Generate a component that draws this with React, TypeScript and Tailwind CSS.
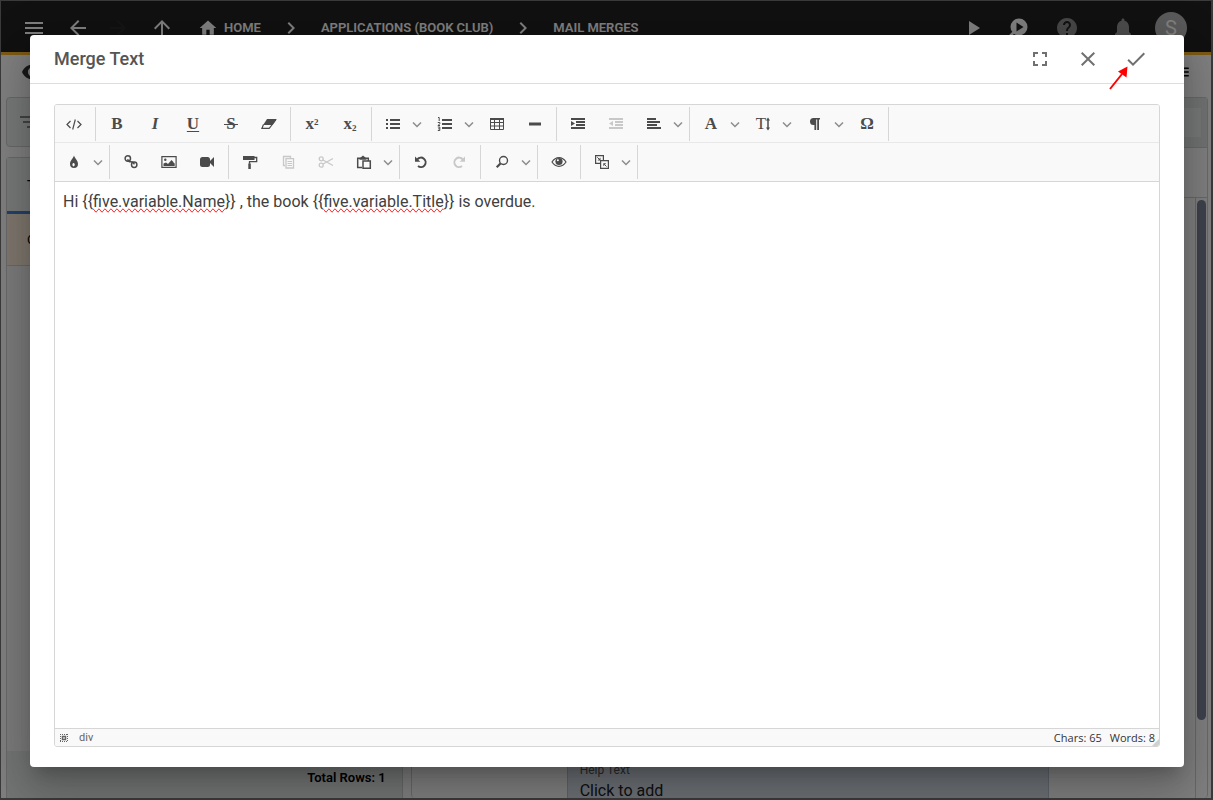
import type { ReactNode } from "react";
import {
  MdArrowBack,
  MdArrowForward,
  MdArrowUpward,
  MdCheck,
  MdChevronRight,
  MdClose,
  MdFilterList,
  MdFullscreen,
  MdHelp,
  MdHome,
  MdMenu,
  MdNotifications,
  MdPlayArrow,
  MdVisibility,
} from "react-icons/md";

interface Tool {
  label: string;
  icon: ReactNode;
  menu?: boolean;
  disabled?: boolean;
}

function Icon({ children }: { children: ReactNode }) {
  return (
    <svg viewBox="0 0 16 16" className="size-4" fill="currentColor" aria-hidden="true">
      {children}
    </svg>
  );
}

function Glyph({ children, className = "" }: { children: ReactNode; className?: string }) {
  return (
    <span className={`font-["Liberation_Serif",serif] text-[17px] leading-4 font-bold ${className}`}>
      {children}
    </span>
  );
}

const stroke = { fill: "none", stroke: "currentColor" };

const rowOne: Tool[][] = [
  [
    {
      label: "HTML code",
      icon: (
        <Icon>
          <path {...stroke} strokeWidth="1.2" d="M4.500 5 1 8.500l3.500 3.500M11.500 5 15 8.500l-3.500 3.500M9.300 3.500 6.700 13.500" />
        </Icon>
      ),
    },
  ],
  [
    { label: "Bold", icon: <Glyph>B</Glyph> },
    { label: "Italic", icon: <Glyph className="italic">I</Glyph> },
    {
      label: "Underline",
      icon: <Glyph className="underline decoration-1 underline-offset-2">U</Glyph>,
    },
    {
      label: "Strikethrough",
      icon: (
        <span className="relative flex items-center justify-center">
          <Glyph>S</Glyph>
          <span className="absolute -inset-x-0.5 top-2 h-px bg-current" />
        </span>
      ),
    },
    {
      label: "Remove format",
      icon: (
        <Icon>
          <path d="M6 3h9.700L11.500 9H2.200z" />
          <path {...stroke} strokeWidth="1.2" d="M2.500 8.500.900 12.400h7.300L11.300 8.500 15 3.500" />
        </Icon>
      ),
    },
  ],
  [
    {
      label: "Superscript",
      icon: (
        <Glyph>
          x<sup className="text-[9px]">2</sup>
        </Glyph>
      ),
    },
    {
      label: "Subscript",
      icon: (
        <Glyph>
          x<sub className="text-[9px]">2</sub>
        </Glyph>
      ),
    },
  ],
  [
    {
      label: "Bulleted list",
      menu: true,
      icon: (
        <Icon>
          <path d="M5 3h10v2H5zM5 7h10v2H5zM5 11h10v2H5zM1 3h2v2H1zM1 7h2v2H1zM1 11h2v2H1z" />
        </Icon>
      ),
    },
    {
      label: "Numbered list",
      menu: true,
      icon: (
        <Icon>
          <path d="M5 3h10v2H5zM5 7h10v2H5zM5 11h10v2H5z" />
          <path {...stroke} d="M1 1.500h1.200v3.500M.800 6.500h2v1.200L1 9.500h2M.800 11h2v3.500h-2M1.200 12.800h1.500" />
        </Icon>
      ),
    },
    {
      label: "Insert table",
      icon: (
        <Icon>
          <path {...stroke} d="M1.500 2.500h13v11h-13zM2 6.500h12M2 10h12M5.500 3v10M10.500 3v10" />
          <path d="M1 2h14v2H1z" />
        </Icon>
      ),
    },
    { label: "Horizontal line", icon: <Icon><path d="M2 6.500h12v3H2z" /></Icon> },
  ],
  [
    {
      label: "Indent",
      icon: (
        <Icon>
          <path d="M1 2h14v2H1zM6 5h9v2H6zM6 8h9v2H6zM1 11h14v2H1zM1 5l4 2.500L1 10z" />
        </Icon>
      ),
    },
    {
      label: "Outdent",
      disabled: true,
      icon: (
        <Icon>
          <path d="M1 2h14v2H1zM7 5h8v2H7zM7 8h8v2H7zM1 11h14v2H1zM5 5 1 7.500 5 10z" />
        </Icon>
      ),
    },
    {
      label: "Align",
      menu: true,
      icon: (
        <Icon>
          <path d="M1 2h9v2H1zM1 5h13v2H1zM1 8h10v2H1zM1 11h14v2H1z" />
        </Icon>
      ),
    },
  ],
  [
    { label: "Font name", menu: true, icon: <Glyph>A</Glyph> },
    {
      label: "Font size",
      menu: true,
      icon: (
        <span className="flex items-center">
          <Glyph className="font-normal!">T</Glyph>
          <svg viewBox="0 0 4 16" className="h-4 w-1" aria-hidden="true">
            <path {...stroke} strokeWidth="1.500" d="M2 3v10" />
            <path fill="currentColor" d="M2 1.500 4 4.500H0zM2 14.500l2-3H0z" />
          </svg>
        </span>
      ),
    },
    {
      label: "Paragraph",
      menu: true,
      icon: (
        <Icon>
          <path d="M6.500 2H13v1.500h-1V14h-1.800V3.500H9.200V14H7.400V9h-.900a3.500 3.500 0 0 1 0-7z" />
        </Icon>
      ),
    },
    { label: "Special character", icon: <Glyph>Ω</Glyph> },
  ],
];

const rowTwo: Tool[][] = [
  [
    {
      label: "Text color",
      menu: true,
      icon: (
        <Icon>
          <path fillRule="evenodd" d="M8 1.500c.700 3 4 5 4 8.500a4 4 0 0 1-8 0c0-3.500 3.300-5.500 4-8.500zM7.500 9a1.200 1.700 0 1 0 .100 0z" />
        </Icon>
      ),
    },
  ],
  [
    {
      label: "Insert link",
      icon: (
        <Icon>
          <g {...stroke} strokeWidth="1.500">
            <circle cx="4.800" cy="4.500" r="2.700" />
            <circle cx="11.200" cy="10.700" r="2.700" />
            <path d="M4.800 5.200c0 1.500 1.200 2.600 3.200 2.600s3 1 3.200 2.500" />
          </g>
        </Icon>
      ),
    },
    {
      label: "Insert image",
      icon: (
        <Icon>
          <path {...stroke} strokeWidth="1.2" d="M.900 2.600h14.200v10.800H.900z" />
          <path d="M2.500 12V9.500l2.500-1L7 10l3.500-4 1.500 1.500.500 1 1.200 1V12z" />
          <circle cx="4.300" cy="5.800" r="1.200" />
        </Icon>
      ),
    },
    {
      label: "Insert video",
      icon: (
        <Icon>
          <rect x="1" y="3" width="10" height="10" rx="2.500" />
          <path d="m10 8 5-5v10z" />
        </Icon>
      ),
    },
  ],
  [
    {
      label: "Format painter",
      icon: (
        <Icon>
          <path d="M1 2h11.500v4H1z" />
          <path {...stroke} strokeWidth="1.3" d="M12 3.500h2.700v4.200H7.500v2" />
          <path d="M6.300 9.500h2.500V15H6.300z" />
        </Icon>
      ),
    },
    {
      label: "Copy",
      disabled: true,
      icon: (
        <Icon>
          <path {...stroke} strokeWidth="1.3" d="M5 11.500H3.500v-9h7v2M6 4.700h7.500v9.300H6z" />
          <path {...stroke} d="M7.500 7.500h4.500M7.500 9.500h4.500M7.500 11.500h4.500" />
        </Icon>
      ),
    },
    {
      label: "Cut",
      disabled: true,
      icon: (
        <Icon>
          <g {...stroke} strokeWidth="1.3">
            <circle cx="3.200" cy="4.800" r="2" />
            <circle cx="3.200" cy="11.200" r="2" />
            <path d="m5 6 10 5.500M5 10l10-5.500" />
          </g>
        </Icon>
      ),
    },
    {
      label: "Paste",
      menu: true,
      icon: (
        <Icon>
          <path {...stroke} strokeWidth="1.5" d="M6 13.500H1.700V4.200h10.600v2M7 7h7.300v7.300H7z" />
          <path d="M3.500 4.500 7 1.500l3.500 3v1.300h-7z" />
        </Icon>
      ),
    },
  ],
  [
    {
      label: "Undo",
      icon: (
        <Icon>
          <path {...stroke} strokeWidth="2" d="M4.300 5.300a4.700 4.700 0 1 1 .700 6.700" />
          <path d="M2 2.500v5.300h5.300z" />
        </Icon>
      ),
    },
    {
      label: "Redo",
      disabled: true,
      icon: (
        <Icon>
          <path {...stroke} strokeWidth="2" d="M11.700 5.300a4.700 4.700 0 1 0-.700 6.700" />
          <path d="M14 2.500v5.300H8.700z" />
        </Icon>
      ),
    },
  ],
  [
    {
      label: "Find",
      menu: true,
      icon: (
        <Icon>
          <circle cx="9.500" cy="6.500" r="4" {...stroke} strokeWidth="1.4" />
          <path {...stroke} strokeWidth="2.200" d="m6.500 9.500-3.800 3.800" />
        </Icon>
      ),
    },
  ],
  [
    {
      label: "Preview",
      icon: (
        <Icon>
          <path {...stroke} strokeWidth="1.2" d="M1 8c2-3 4.500-4.300 7-4.300S13 5 15 8c-2 3-4.500 4.300-7 4.300S3 11 1 8z" />
          <circle cx="8" cy="7.500" r="3.600" />
          <circle cx="6.900" cy="6.300" r="1" fill="#f9f9f9" />
        </Icon>
      ),
    },
  ],
  [
    {
      label: "Select block",
      menu: true,
      icon: (
        <Icon>
          <path {...stroke} strokeWidth="1.200" d="M6.500 9.400H1.600V1.600h7.800v4.900M6.600 6.600h7.800v7.800H6.600z" />
          <path {...stroke} d="m3.300 3.300 2 2M12.500 12.500l-2-2" />
          <path d="M6.500 3.500v3h-3zM9.300 12.300v-3h3z" />
        </Icon>
      ),
    },
  ],
];

function ToolbarRow({ groups }: { groups: Tool[][] }) {
  return (
    <div className="flex">
      {groups.map((group) => (
        <div
          key={group[0].label}
          className="flex h-[34px] border-r border-[#d6d6d6] px-0.5 first:pl-0"
        >
          {group.map((tool) => (
            <div key={tool.label} className="flex">
              <button
                type="button"
                aria-label={tool.label}
                disabled={tool.disabled}
                className="flex w-[38px] items-center justify-center text-[#4b4b4b] disabled:text-[#c8c8c8]"
              >
                {tool.icon}
              </button>
              {tool.menu && (
                <button
                  type="button"
                  aria-label={`${tool.label} options`}
                  className="flex w-3.5 items-center text-[#8c8c8c]"
                >
                  <svg viewBox="0 0 10 10" className="size-2.5" aria-hidden="true">
                    <path {...stroke} strokeWidth="1.500" d="m1 3.500 4 4 4-4" />
                  </svg>
                </button>
              )}
            </div>
          ))}
        </div>
      ))}
    </div>
  );
}

function TopBar() {
  return (
    <header className="flex h-[54px] shrink-0 items-center justify-between border-b-3 border-[#fbb72a] bg-[#222] pt-0.5 pr-6 pl-[21px] text-white">
      <div className="flex items-center">
        <button type="button" aria-label="Menu"><MdMenu size={24} /></button>
        <button type="button" aria-label="Back" className="ml-5"><MdArrowBack size={24} /></button>
        <button type="button" aria-label="Forward" disabled className="ml-4 text-[#2b2b2b]">
          <MdArrowForward size={24} />
        </button>
        <button type="button" aria-label="Up" className="ml-5"><MdArrowUpward size={24} /></button>
        <nav className="ml-6 flex items-center text-[13px] font-semibold">
          <a href="#home" className="flex items-center gap-1.5">
            <MdHome size={20} />
            HOME
          </a>
          <MdChevronRight size={24} className="mx-[18px]" />
          <a href="#applications">APPLICATIONS (BOOK CLUB)</a>
          <MdChevronRight size={24} className="mx-[18px]" />
          <a href="#mail-merges">MAIL MERGES</a>
        </nav>
      </div>
      <div className="flex items-center">
        <button type="button" aria-label="Run"><MdPlayArrow size={24} /></button>
        <button type="button" aria-label="Inspect" className="ml-[22px]">
          <svg viewBox="0 0 24 24" className="size-6" aria-hidden="true">
            <circle cx="12" cy="11" r="8.500" fill="currentColor" />
            <path {...stroke} strokeWidth="2.500" d="m7 16-4.500 4.500" />
            <path fill="#222" d="M9.500 6.500v9l7-4.500z" />
          </svg>
        </button>
        <button type="button" aria-label="Help" className="ml-6 text-[#8e8e8e]">
          <MdHelp size={24} />
        </button>
        <button type="button" aria-label="Notifications" className="ml-8 text-[#999]">
          <MdNotifications size={24} />
        </button>
        <span className="ml-5 flex size-8 items-center justify-center rounded-full bg-[#b5b5b5] text-xl">
          S
        </span>
      </div>
    </header>
  );
}

function PageBehind() {
  return (
    <div className="flex h-screen flex-col border border-r-2 border-b-2 border-[#777] bg-white">
      <TopBar />
      <div className="flex h-[42px] shrink-0 items-center justify-between px-5 pb-2">
        <MdVisibility size={24} className="text-[#333]" />
        <MdMenu size={18} />
      </div>
      <div className="flex min-h-0 flex-1 gap-2 pr-[3px] pl-[5px]">
        <section className="flex w-[33%] flex-col">
          <div className="flex h-[50px] shrink-0 items-center rounded border border-[#d0d0d0] bg-[#eef2f3] px-2.5 text-[#888]">
            <MdFilterList size={24} />
          </div>
          <div className="mt-2.5 flex flex-1 flex-col rounded-t border border-b-0 border-[#d0d0d0] bg-[#f7f7f7]">
            <div className="flex h-[56px] items-center border-b-3 border-[#4285d6] bg-[#eef2f3] px-5 text-[13px] font-medium">
              Title
            </div>
            <div className="flex h-[52px] items-center border-b border-[#d0d0d0] bg-[#ffefdc] px-5 text-[13px]">
              Overdue
            </div>
            <div className="mt-auto flex h-[47px] items-center justify-end bg-[#e6eaeb] px-4 pt-1.5 text-[13px] font-semibold">
              Total Rows: 1
            </div>
          </div>
        </section>
        <section className="flex flex-1 flex-col rounded border border-b-0 border-[#d0d0d0]">
          <div className="flex h-[50px] shrink-0 border-b border-[#d0d0d0] bg-[#e2e7e7] p-2.5 pr-1.5">
            <div className="flex-1 bg-[#eef3f2]" />
          </div>
          <div className="h-[50px] shrink-0 border-b border-[#d0d0d0]" />
          <div className="flex min-h-0 flex-1">
            <div className="flex flex-1 flex-col justify-end">
              <div className="mr-[146px] ml-[155px] border border-b-0 border-[#b9c6d6] bg-[#d8e0ea] px-3 pt-5">
                <label htmlFor="help-text" className="block text-xs leading-4 text-[#555]">
                  Help Text
                </label>
                <input
                  id="help-text"
                  defaultValue="Click to add"
                  className="block h-5 w-full bg-transparent pt-1 text-base leading-4 text-[#222]"
                />
              </div>
            </div>
            <div className="w-3 border-l border-[#d0d0d0] px-px pt-0.5">
              <div className="h-[520px] rounded-full bg-[#7d8599]" />
            </div>
          </div>
        </section>
      </div>
    </div>
  );
}

function MergeTextDialog() {
  return (
    <div
      role="dialog"
      aria-modal="true"
      aria-labelledby="dialog-title"
      className="relative flex flex-1 flex-col rounded bg-white shadow-[0_11px_15px_-7px_rgba(0,0,0,0.2),0_24px_38px_3px_rgba(0,0,0,0.14),0_9px_46px_8px_rgba(0,0,0,0.12)]"
    >
      <div className="flex h-[49px] shrink-0 items-center justify-between border-b border-[#dedede] px-6">
        <h1 id="dialog-title" className="text-lg font-medium text-[#555]">Merge Text</h1>
        <div className="flex text-[#707070]">
          <button type="button" aria-label="Full screen" className="flex size-12 items-center justify-center">
            <MdFullscreen size={24} />
          </button>
          <button type="button" aria-label="Close" className="flex size-12 items-center justify-center">
            <MdClose size={24} />
          </button>
          <button type="button" aria-label="Save" className="relative flex size-12 items-center justify-center">
            <MdCheck size={24} />
            <svg viewBox="0 0 20 26" className="absolute top-[30px] -left-1 h-[26px] w-5" aria-hidden="true">
              <path d="M2 24 14 9" fill="none" stroke="#f00" strokeWidth="2" />
              <path d="M19.500 1.500 10 6.500l8.500 6z" fill="#f00" />
            </svg>
          </button>
        </div>
      </div>

      <div className="flex min-h-0 flex-1 px-6 py-5">
        <div className="relative flex flex-1 flex-col overflow-hidden rounded-[3px] border border-[#d6d6d6]">
          <div className="bg-[#f9f9f9]">
            <div className="border-b border-[#e8e8e8] pt-0.5 pb-px">
              <ToolbarRow groups={rowOne} />
            </div>
            <div className="border-b border-[#d6d6d6] py-0.5">
              <ToolbarRow groups={rowTwo} />
            </div>
          </div>
          <div
            contentEditable
            suppressContentEditableWarning
            spellCheck={false}
            role="textbox"
            aria-label="Merge text"
            className="flex-1 p-2 text-base text-[#404040] outline-none"
          >
            Hi {"{{"}
            <Misspelt>five.variable.Name</Misspelt>
            {"}}"} , the book {"{{"}
            <Misspelt>five.variable.Title</Misspelt>
            {"}}"} is overdue.
          </div>
          <div className="flex h-[18px] items-center justify-between border-t border-[#d6d6d6] bg-[#f9f9f9] px-1 text-[11px] leading-4 text-[#333]">
            <div className="flex items-center gap-2.5 text-[#666]">
              <svg viewBox="0 0 10 10" className="size-2.5" aria-hidden="true">
                <path {...stroke} strokeDasharray="1 1" d="M1 1.500h8M1 8.500h8M1.500 1v8M8.500 1v8" />
                <path {...stroke} strokeWidth="1.500" d="M3.500 3.500h3v3h-3z" />
              </svg>
              div
            </div>
            <div className="flex gap-2 font-['Open_Sans',sans-serif]">
              <span>Chars: 65</span>
              <span>Words: 8</span>
            </div>
          </div>
          <svg viewBox="0 0 7 7" className="absolute right-0 bottom-0 size-[7px]" aria-hidden="true">
            <path d="M7 0v7H0z" fill="#d0d0d0" />
          </svg>
        </div>
      </div>
    </div>
  );
}

function Misspelt({ children }: { children: ReactNode }) {
  return <span className="[text-decoration-line:spelling-error]">{children}</span>;
}

export default function App() {
  return (
    <div className="relative overflow-hidden font-[Roboto,sans-serif]">
      <PageBehind />
      <div className="absolute inset-0 flex bg-black/50 pt-[35px] pr-[29px] pb-[33px] pl-[30px]">
        <MergeTextDialog />
      </div>
    </div>
  );
}
